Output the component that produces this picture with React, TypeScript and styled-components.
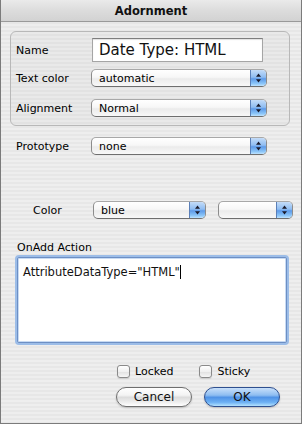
import React from 'react'
import styled, { createGlobalStyle } from 'styled-components'

const GlobalStyle = createGlobalStyle`
    html, body {
        margin: 0;
        padding: 0;
        background: #ececec;
    }
    body {
        font-family: 'DejaVu Sans', 'Liberation Sans', sans-serif;
        font-size: 11px;
        color: #000;
    }
`

function PopupArrows(): JSX.Element {
    return (
        <svg width="7" height="10" viewBox="0 0 7 10">
            <path d="M3.5 0.5 L6 3.8 L1 3.8 Z" fill="#1a1a2a" />
            <path d="M3.5 9.5 L6 6.2 L1 6.2 Z" fill="#1a1a2a" />
        </svg>
    )
}

function Popup({ value, width }: { value: string; width: number }): JSX.Element {
    return (
        <PopupStyles $w={width}>
            <span className="popup--value">{value}</span>
            <span className="popup--cap">
                <PopupArrows />
            </span>
        </PopupStyles>
    )
}

function Check({ label }: { label: string }): JSX.Element {
    return (
        <CheckStyles>
            <span className="check--box" />
            <span>{label}</span>
        </CheckStyles>
    )
}

export default function App(): JSX.Element {
    return (
        <>
            <GlobalStyle />
            <Window>
                <TitleBar>Adornment</TitleBar>
                <Body>
                    <GroupBox>
                        <Row $mt={0}>
                            <Label>Name</Label>
                            <NameField>Date Type: HTML</NameField>
                        </Row>
                        <Row $mt={7}>
                            <Label>Text color</Label>
                            <Popup value="automatic" width={176} />
                        </Row>
                        <Row $mt={12}>
                            <Label>Alignment</Label>
                            <Popup value="Normal" width={176} />
                        </Row>
                    </GroupBox>
                    <Row $mt={11} $pl={6}>
                        <Label>Prototype</Label>
                        <Popup value="none" width={176} />
                    </Row>
                    <Row $mt={46} $pl={6}>
                        <Label $indent={17}>Color</Label>
                        <ColorPopups>
                            <Popup value="blue" width={113} />
                            <Popup value="" width={75} />
                        </ColorPopups>
                    </Row>
                    <SectionLabel>OnAdd Action</SectionLabel>
                    <ActionArea>
                        AttributeDataType="HTML"<Caret />
                    </ActionArea>
                    <Checks>
                        <Check label="Locked" />
                        <Check label="Sticky" />
                    </Checks>
                    <Buttons>
                        <PushButton>Cancel</PushButton>
                        <PushButton $primary>OK</PushButton>
                    </Buttons>
                </Body>
            </Window>
        </>
    )
}

const Window = styled.div`
    width: 302px;
    height: 424px;
    box-sizing: border-box;
    border: 1px solid #7b7b7b;
    border-top: none;
    display: flex;
    flex-direction: column;
    background: repeating-linear-gradient(
        to bottom,
        #eeeeee 0px,
        #eeeeee 2px,
        #e7e7e7 2px,
        #e7e7e7 4px
    );
    overflow: hidden;
`

const TitleBar = styled.div`
    height: 22px;
    box-sizing: border-box;
    border-bottom: 1px solid #9a9a9a;
    background: linear-gradient(#eaeaea, #dcdcdc 50%, #d2d2d2);
    display: flex;
    align-items: center;
    justify-content: center;
    font-weight: bold;
    font-size: 11.5px;
    color: #111;
    padding-top: 1px;
`

const Body = styled.div`
    flex: 1;
    display: flex;
    flex-direction: column;
    padding: 9px 0 0 9px;
`

const GroupBox = styled.div`
    width: 280px;
    box-sizing: border-box;
    border: 1px solid #b8b8b8;
    border-radius: 6px;
    padding: 6px 0 8px 5px;
    display: flex;
    flex-direction: column;
    background: rgba(0, 0, 0, 0.018);
`

const Row = styled.div<{ $mt: number; $pl?: number }>`
    display: flex;
    align-items: center;
    margin-top: ${(p) => p.$mt}px;
    padding-left: ${(p) => p.$pl ?? 0}px;
`

const Label = styled.div<{ $indent?: number }>`
    width: 75px;
    flex: none;
    box-sizing: border-box;
    padding-left: ${(p) => p.$indent ?? 0}px;
    white-space: nowrap;
`

const NameField = styled.div`
    width: 171px;
    height: 24px;
    margin-left: 1px;
    box-sizing: border-box;
    border: 1px solid #a5a5a5;
    border-top-color: #7e7e7e;
    background: #fff;
    box-shadow: inset 0 1px 1px rgba(0, 0, 0, 0.12);
    display: flex;
    align-items: center;
    padding-left: 6px;
    font-size: 15px;
    color: #111;
`

const PopupStyles = styled.div<{ $w: number }>`
    width: ${(p) => p.$w}px;
    height: 18px;
    box-sizing: border-box;
    border: 1px solid #8c8c8c;
    border-top-color: #a8a8a8;
    border-bottom-color: #6e6e6e;
    border-radius: 5px;
    overflow: hidden;
    display: flex;
    align-items: stretch;
    background: linear-gradient(#ffffff, #f7f7f7 45%, #ebebeb 55%, #f8f8f8);
    .popup--value {
        flex: 1;
        display: flex;
        align-items: center;
        padding-left: 7px;
        font-size: 11px;
        white-space: nowrap;
    }
    .popup--cap {
        width: 15px;
        flex: none;
        display: flex;
        align-items: center;
        justify-content: center;
        border-left: 1px solid #5a7fb8;
        background: linear-gradient(#c4dcf8, #8fbdf2 45%, #5d9ae9 55%, #8cc6f8 85%, #bfe3ff);
    }
`

const ColorPopups = styled.div`
    display: flex;
    gap: 12px;
    margin-left: 2px;
`

const SectionLabel = styled.div`
    margin-top: 22px;
    padding-left: 7px;
    line-height: 13px;
`

const ActionArea = styled.div`
    width: 270px;
    height: 86px;
    margin-top: 3px;
    margin-left: 7px;
    box-sizing: border-box;
    border: 1px solid #6d8fc4;
    box-shadow: 0 0 0 2px #9cbde8, inset 0 0 0 1px #c8dbf3;
    border-radius: 2px;
    background: #fff;
    padding: 7px 0 0 5px;
    font-size: 11.5px;
    line-height: 14px;
    color: #111;
    white-space: nowrap;
`

const Caret = styled.span`
    display: inline-block;
    width: 1px;
    height: 14px;
    background: #000;
    vertical-align: top;
`

const Checks = styled.div`
    display: flex;
    gap: 26px;
    margin-top: 22px;
    padding-left: 107px;
`

const CheckStyles = styled.label`
    display: flex;
    align-items: center;
    gap: 5px;
    font-size: 11px;
    .check--box {
        width: 13px;
        height: 13px;
        box-sizing: border-box;
        border: 1px solid #8a8a8a;
        border-radius: 3px;
        background: linear-gradient(#ffffff, #f0f0f0 50%, #e2e2e2 55%, #f6f6f6);
        box-shadow: 0 1px 1px rgba(0, 0, 0, 0.12);
    }
`

const Buttons = styled.div`
    display: flex;
    gap: 12px;
    margin-top: 9px;
    padding-left: 106px;
`

const PushButton = styled.div<{ $primary?: boolean }>`
    width: 76px;
    height: 20px;
    box-sizing: border-box;
    border-radius: 10px;
    display: flex;
    align-items: center;
    justify-content: center;
    font-size: 12px;
    color: #111;
    border: 1px solid ${(p) => (p.$primary ? '#2e4f8f' : '#6f6f6f')};
    background: ${(p) =>
        p.$primary
            ? 'linear-gradient(#c9e0fa, #8ebdf1 40%, #4f92e6 52%, #6fb2f4 80%, #b4e3ff)'
            : 'linear-gradient(#ffffff, #f3f3f3 40%, #dcdcdc 52%, #efefef 80%, #ffffff)'};
    box-shadow: 0 1px 2px rgba(0, 0, 0, 0.2);
`
